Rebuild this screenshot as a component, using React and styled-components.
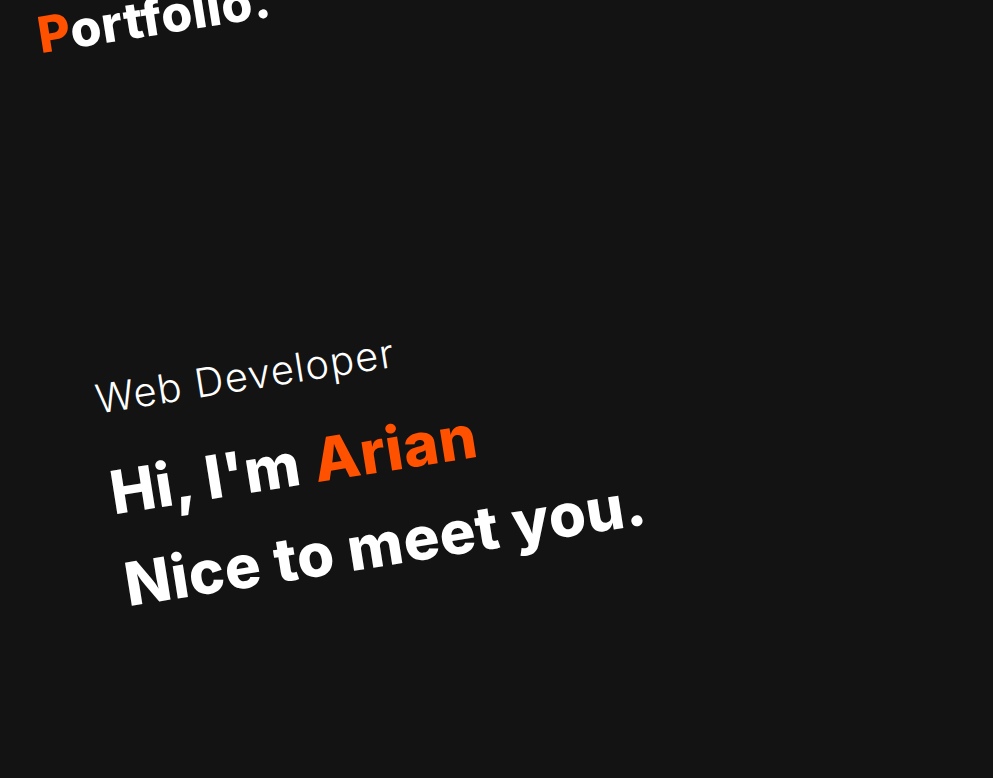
import React from "react";
import styled, { createGlobalStyle } from "styled-components";

const GlobalStyle = createGlobalStyle`
  html, body {
    margin: 0;
    padding: 0;
    background: #131313;
    overflow: hidden;
  }
  * {
    box-sizing: border-box;
  }
`;

const Page = styled.main`
  width: 993px;
  height: 778px;
  padding-left: 32px;
  font-family: Inter, "Noto Sans", sans-serif;
  color: #ffffff;
  transform: rotate(-9deg);
  transform-origin: 0 0;
`;

const Header = styled.header`
  display: flex;
  align-items: center;
  padding-top: 16px;
`;

const Logo = styled.h1`
  margin: 0;
  font-size: 50px;
  font-weight: 800;
  line-height: 1;
  letter-spacing: 0.5px;
`;

const Accent = styled.span`
  color: #ff5100;
`;

const Hero = styled.section`
  display: flex;
  flex-direction: column;
  padding-top: 324px;
`;

const Role = styled.h3`
  margin: 0;
  font-size: 40px;
  font-weight: 300;
  line-height: 1;
  letter-spacing: 1.3px;
`;

const Title = styled.h2`
  margin: 0;
  margin-top: 28px;
  font-size: 60px;
  font-weight: 800;
  line-height: 93px;
  letter-spacing: 0.6px;
`;

export default function App() {
  return (
    <>
      <GlobalStyle />
      <Page>
        <Header>
          <Logo>
            <Accent>P</Accent>ortfolio.
          </Logo>
        </Header>
        <Hero>
          <Role>Web Developer</Role>
          <Title>
            Hi, I'm <Accent>Arian</Accent>
            <br />
            Nice to meet you.
          </Title>
        </Hero>
      </Page>
    </>
  );
}
